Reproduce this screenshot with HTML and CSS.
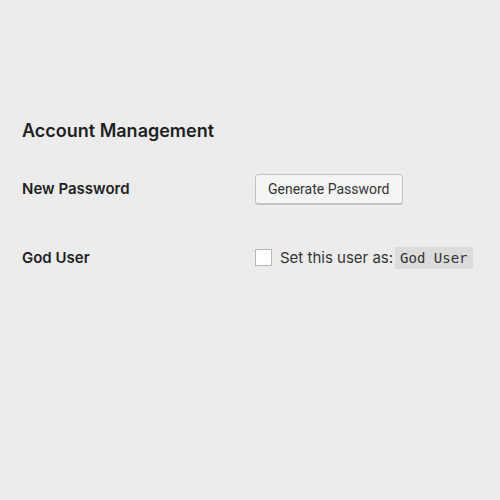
FILE: index.html
```html
<!DOCTYPE html>
<html lang="en">
<head>
<meta charset="utf-8">
<title>Account Management</title>
<link rel="stylesheet" href="styles.css">
</head>
<body>
<main class="settings">
  <h2 class="title">Account Management</h2>
  <form class="form">
    <div class="row">
      <label class="name" for="generate">New Password</label>
      <div class="field"><button class="button" id="generate" type="button">Generate Password</button></div>
    </div>
    <div class="row">
      <span class="name" id="god-name">God User</span>
      <div class="field">
        <input class="check" id="god" type="checkbox" aria-describedby="god-name">
        <label class="option" for="god">Set this user as: <code class="role">God User</code></label>
      </div>
    </div>
  </form>
</main>
</body>
</html>
```
FILE: styles.css
```css
* {
  box-sizing: border-box;
}

body {
  margin: 0;
  background: #ececec;
  color: #333333;
  font-family: Inter, "Liberation Sans", sans-serif;
  font-size: 15px;
  line-height: 22px;
}

.settings {
  padding: 119px 22px 0;
}

.title {
  margin: 0;
  color: #1d1e22;
  font-size: 18px;
  font-weight: 600;
  line-height: 24px;
}

.form {
  display: grid;
  gap: 38px;
  margin-top: 30px;
}

.row {
  display: grid;
  grid-template-columns: 233px 1fr;
  align-items: center;
  min-height: 31px;
}

.name {
  color: #1d1e22;
  font-weight: 600;
}

.field {
  display: flex;
  align-items: center;
  gap: 8px;
  white-space: nowrap;
}

.button {
  height: 30px;
  padding: 0 12px;
  border: 1px solid #c4c4c4;
  border-radius: 3px;
  background: #f5f5f5;
  box-shadow: 0 1px 0 #c4c4c4;
  color: #333333;
  font: 14px/24px Roboto, "Liberation Sans", sans-serif;
}

.check {
  appearance: none;
  width: 17px;
  height: 17px;
  margin: 0;
  border: 1px solid #b4b9be;
  background: #ffffff;
}

.option {
  display: flex;
  align-items: center;
  gap: 2px;
}

.role {
  padding: 0 5px;
  background: #dcdcdc;
  font-family: "DejaVu Sans Mono", "Liberation Mono", monospace;
  font-size: 14px;
}
```
